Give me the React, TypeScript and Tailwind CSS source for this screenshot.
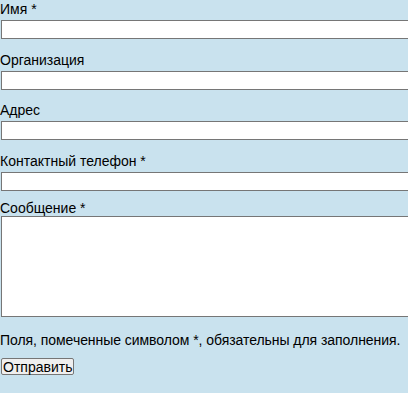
export default function App() {
  const fields = [
    { label: "Имя *" },
    { label: "Организация" },
    { label: "Адрес" },
    { label: "Контактный телефон *" },
  ];
  return (
    <div className="h-[393px] w-[408px] overflow-hidden bg-[#c9e2ee] text-[14px] leading-[17px] text-black [font-family:'Liberation_Sans',Arial,sans-serif]">
      <form onSubmit={(e) => e.preventDefault()}>
        {fields.map((f, i) => (
          <div key={f.label} className={i === 1 ? "mb-[11px]" : "mb-[12px]"}>
            <div className="h-[20px] pt-[1px]">{f.label}</div>
            <input
              type="text"
              className="ml-[1px] block h-[19px] w-[430px] border border-[#767676] bg-white"
            />
          </div>
        ))}
        <div className="h-[16px] -mt-[3px]">Сообщение *</div>
        <textarea className="ml-[1px] block h-[101px] w-[430px] resize-none border border-[#767676] bg-white" />
        <p className="mt-[15px] whitespace-nowrap tracking-[-0.05px]">
          Поля, помеченные символом *, обязательны для заполнения.
        </p>
        <button
          type="submit"
          className="ml-[1px] mt-[9px] h-[17px] rounded-[2px] border border-[#767676] bg-[#efefef] px-[1px] leading-[14px]"
        >
          Отправить
        </button>
      </form>
    </div>
  );
}
